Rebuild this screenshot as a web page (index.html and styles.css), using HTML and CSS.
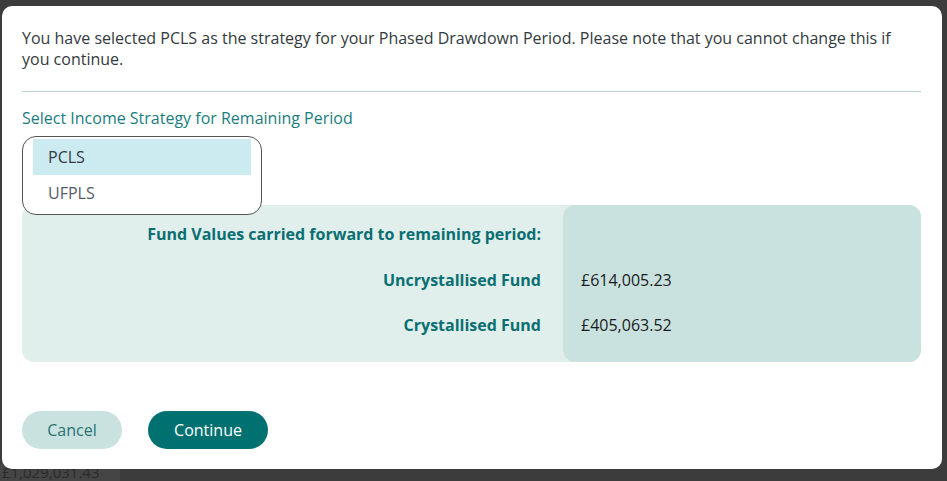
FILE: index.html
```html
<!DOCTYPE html>
<html>
<head>
<meta charset="utf-8">
<link rel="stylesheet" href="styles.css">
</head>
<body>
<div class="backdrop">
  <div class="under">£1,029,031.43</div>
  <div class="modal">
    <p class="notice">You have selected PCLS as the strategy for your Phased Drawdown Period. Please note that you cannot change this if you continue.</p>
    <hr class="divider">
    <div class="field-label">Select Income Strategy for Remaining Period</div>
    <div class="listbox">
      <div class="option selected">PCLS</div>
      <div class="option">UFPLS</div>
    </div>
    <div class="funds">
      <div class="labels">
        <div class="row">Fund Values carried forward to remaining period:</div>
        <div class="row">Uncrystallised Fund</div>
        <div class="row">Crystallised Fund</div>
      </div>
      <div class="values">
        <div class="row"></div>
        <div class="row">£614,005.23</div>
        <div class="row">£405,063.52</div>
      </div>
    </div>
    <div class="actions">
      <button class="btn btn-cancel">Cancel</button>
      <button class="btn btn-continue">Continue</button>
    </div>
  </div>
</div>
</body>
</html>
```

FILE: styles.css
```css
html, body {
  margin: 0;
  padding: 0;
}
body {
  width: 947px;
  height: 481px;
  overflow: hidden;
  background: #3b3c3b;
  font-family: "Open Sans", "Noto Sans", sans-serif;
}
.backdrop {
  position: relative;
  width: 947px;
  height: 481px;
  padding: 6px 5px 0 2px;
  box-sizing: border-box;
}
.under {
  position: absolute;
  left: 0;
  top: 464px;
  width: 120px;
  height: 17px;
  background: #444544;
  color: #2a2a2a;
  font-size: 15px;
  line-height: 17px;
  padding-left: 2px;
  box-sizing: border-box;
}
.modal {
  position: relative;
  background: #fff;
  width: 940px;
  height: 463px;
  border-radius: 10px;
  padding: 22px 20px 0 20px;
  box-sizing: border-box;
}
.notice {
  margin: 0;
  font-size: 16px;
  line-height: 21px;
  color: #333a40;
}
.divider {
  border: 0;
  border-top: 1px solid #bcd6d6;
  margin: 21px 0 0 0;
  width: 899px;
}
.field-label {
  margin-top: 16px;
  font-size: 16px;
  line-height: 20px;
  color: #1a7d80;
}
.listbox {
  position: relative;
  z-index: 2;
  background: #fff;
  margin-top: 8px;
  width: 240px;
  height: 79px;
  box-sizing: border-box;
  border: 1px solid #555;
  border-radius: 14px;
  padding: 2px 10px 0 10px;
}
.option {
  height: 36px;
  line-height: 36px;
  padding-left: 15px;
  font-size: 16px;
  color: #555c66;
}
.option.selected {
  background: #ccebf1;
  color: #333a44;
}
.funds {
  margin-top: -10px;
  width: 899px;
  height: 157px;
  display: flex;
  background: #e1efec;
  border-radius: 12px;
}
.labels {
  width: 541px;
  padding-top: 18px;
  padding-right: 22px;
  box-sizing: border-box;
  text-align: right;
  font-weight: 700;
  color: #0a6f72;
}
.values {
  flex: 1;
  background: #c9e2df;
  border-radius: 12px;
  padding-top: 18px;
  padding-left: 18px;
  color: #1c1c1c;
}
.row {
  height: 45.5px;
  line-height: 22px;
  font-size: 16px;
}
.actions {
  margin-top: 49px;
  display: flex;
  gap: 26px;
}
.btn {
  height: 38px;
  border: 0;
  border-radius: 19px;
  font-family: "Open Sans", "Noto Sans", sans-serif;
  font-size: 16px;
  padding: 0;
}
.btn-cancel {
  width: 100px;
  background: #c9e2df;
  color: #2a7275;
}
.btn-continue {
  width: 120px;
  background: #007170;
  color: #fff;
}
```
